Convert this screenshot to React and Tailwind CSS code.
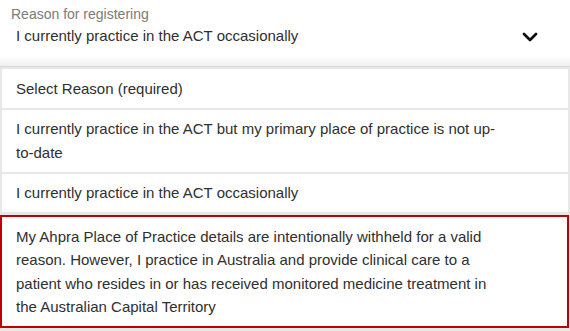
import React from 'react'

const options = [
    'Select Reason (required)',
    'I currently practice in the ACT but my primary place of practice is not up-to-date',
    'I currently practice in the ACT occasionally',
]

const App = () => {
    return (
        <div className="w-[570px] h-[331px] bg-[#e8e8e8] overflow-hidden font-['Liberation_Sans',Arial,sans-serif]">

            <div className="h-[67px] bg-linear-to-b from-white from-85% to-[#efefef] border-b border-[#d8d8d8] pl-[11px] pr-[32px] pt-[6px]">
                <div className="text-[14px] leading-[16px] text-[#7b7b7b]">Reason for registering</div>
                <div className="mt-[4px] pl-[5px] flex justify-between items-center">
                    <span className="text-[15px] leading-[20px] text-[#2f2f2f]">I currently practice in the ACT occasionally</span>
                    <svg width="16" height="11" viewBox="0 0 16 11" className="mt-[2px]">
                        <polyline points="2,2 8,8 14,2" fill="none" stroke="#111" strokeWidth="2.8" strokeLinecap="round" strokeLinejoin="round" />
                    </svg>
                </div>
            </div>

            <div className="flex flex-col gap-[2px] pt-[2px]">
                {options.map((text) => (
                    <div key={text} className="mx-[2px] bg-white pl-[14px] pr-[62px] py-[7.5px] text-[15px] leading-[23.5px] text-[#2f2f2f]">
                        {text}
                    </div>
                ))}
                <div className="mt-[1px] mr-[1px] bg-white border-2 border-[#c00000] pl-[14px] pr-[60px] py-[7.5px] text-[15px] leading-[23.5px] text-[#2f2f2f]">
                    My Ahpra Place of Practice details are intentionally withheld for a valid reason. However, I practice in Australia and provide clinical care to a patient who resides in or has received monitored medicine treatment in the Australian Capital Territory
                </div>
            </div>

        </div>
    )
}

export default App
